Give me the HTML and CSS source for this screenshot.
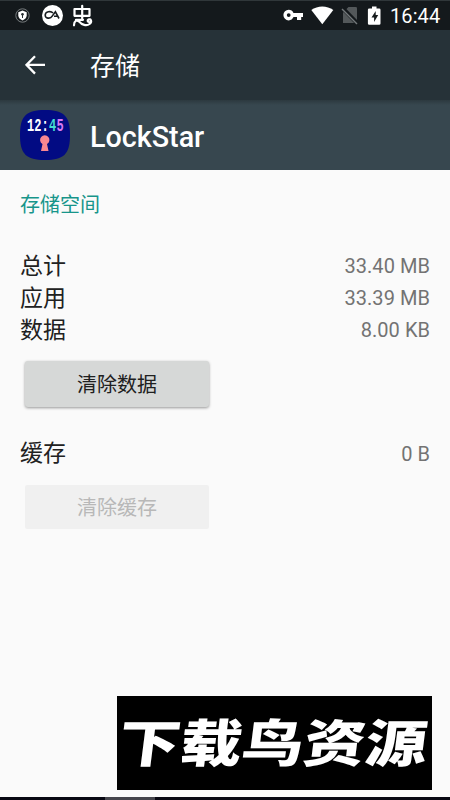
FILE: index.html
```html
<!DOCTYPE html>
<html lang="zh-CN">
<head>
<meta charset="utf-8">
<title>存储</title>
<link rel="stylesheet" href="styles.css">
</head>
<body>
<div class="screen">
  <div class="status">
    <svg class="status-icons" width="100" height="30" viewBox="0 0 100 30">
      <circle cx="22.5" cy="14.500" r="6.700" fill="none" stroke="#777c7e"/>
      <path d="M18.300 11.200l4.200-1.700 4.200 1.700v3.300c0 2.300-1.800 4-4.200 5-2.400-1-4.200-2.700-4.200-5z" fill="#fff"/>
      <circle cx="22.500" cy="13.300" r="1.300" fill="#293033"/><path d="M22.500 13v4" stroke="#293033"/>
      <circle cx="52.500" cy="14.500" r="10.500" fill="#fff"/>
      <path d="M53 12c-2.200-2.300-7.500-1.500-7.800 1.900-.2 3.900 5.200 4.300 7 1.200l3.200-4.300 3.600 6.700M54 15.200h4.500" fill="none" stroke="#181d20" stroke-width="1.600"/>
      <path d="M74.500 8h15v6.800h-15zM82.200 4.800V19M74 24.300c0-4.500 3-6 5.200-3.600 2.500 3.300 7.500 4.500 10.300 2.300 3.200-2.800 1-5.500-1-4.500-1.500.8-.8 2.300.3 2.300M76 18.800h7" fill="none" stroke="#fff" stroke-width="2.200" stroke-linecap="round" stroke-linejoin="round"/>
    </svg>
    <svg width="112" height="30" viewBox="276 0 112 30">
      <path fill="#fff" fill-rule="evenodd" d="M293.500 12c-.8-2-2.700-3.200-4.800-3.200a5.300 5.300 0 1 0 0 10.600c2.200 0 4-1.300 4.800-3.300h3.500v3h4.200v-3h1.800V12zM288.700 12.200a1.900 1.900 0 1 1 0 3.800a1.900 1.900 0 0 1 0-3.800z"/>
      <path fill="#fff" d="M311.300 9c6.300-4.700 15.700-4.700 22 0l-11 14.200z"/>
      <path fill="#53585a" d="M348.500 6h7.200q1.300 0 1.300 1.300V22h-14V11.500z"/>
      <path d="M343 7.500l14.500 15" stroke="#14191c" stroke-width="4"/><path d="M342 8l15 15" stroke="#73787a" stroke-width="1.400"/>
      <path fill="#fff" d="M372 5.500h4.500v2h2.700q1.300 0 1.300 1.300v13.600q0 1.300-1.300 1.300h-10q-1.300 0-1.300-1.300V8.800q0-1.300 1.300-1.300h2.800z"/>
      <path fill="#171c1e" d="M375.700 10l-4.200 6.500h2.600v4.600l4.100-7h-2.500z"/>
    </svg>
    <span class="clock">16:44</span>
  </div>
  <header class="toolbar">
    <svg width="20" height="20" viewBox="0 0 20 20"><path d="M10 1.200L1.500 9.900l8.500 8.700M2 9.900h18" fill="none" stroke="#fff" stroke-width="2.300"/></svg>
    <h1>存储</h1>
  </header>
  <section class="app">
    <div class="app-icon">
      <svg width="50" height="50" viewBox="0 0 50 50">
        <path d="M25 0C44 0 50 6 50 25S44 50 25 50 0 44 0 25 6 0 25 0z" fill="#020b83"/>
        <path d="M22.500 34a4.700 4.700 0 1 1 4.500 0l1.500 7h-7.500z" fill="#fa8791"/>
      </svg>
      <div class="digits"><span>12:</span><span class="mint">4</span><span class="violet">5</span></div>
    </div>
    <h2>LockStar</h2>
  </section>
  <main>
    <h3>存储空间</h3>
    <dl>
      <div class="row"><dt>总计</dt><dd>33.40 MB</dd></div>
      <div class="row"><dt>应用</dt><dd>33.39 MB</dd></div>
      <div class="row"><dt>数据</dt><dd>8.00 KB</dd></div>
    </dl>
    <button class="btn">清除数据</button>
    <dl class="cache"><div class="row"><dt>缓存</dt><dd>0 B</dd></div></dl>
    <button class="btn btn-off" disabled>清除缓存</button>
  </main>
  <div class="watermark"><span>下载鸟资源</span></div>
  <div class="bottom"><i></i></div>
</div>
</body>
</html>
```
FILE: styles.css
```css
* { box-sizing: border-box; }
body { margin: 0; background: #fafafa; font-family: Roboto, "Noto Sans CJK SC", sans-serif; }
h1, h2, h3, dl, dd { margin: 0; font-weight: 400; }
svg { display: block; flex: none; }
.screen { position: relative; width: 450px; height: 800px; overflow: hidden; display: flex; flex-direction: column; }
.status { height: 30px; background: #14191c; border-top: 1px solid #30373a; display: flex; align-items: center; flex: none; }
.status-icons { margin-right: auto; }
.clock { color: #fff; font-size: 20px; line-height: 30px; width: 62px; padding-left: 2px; letter-spacing: .1px; }
.toolbar { height: 70px; background: #263238; display: flex; align-items: center; padding-left: 25px; gap: 45px; color: #fff; flex: none; }
.toolbar h1 { font-size: 25px; line-height: 36px; padding-top: 3px; }
.app { height: 70px; background: linear-gradient(#2c393f, #37474f 5px); display: flex; align-items: center; padding-left: 20px; gap: 20px; color: #fff; flex: none; }
.app h2 { font-size: 28.7px; font-weight: 500; line-height: 36px; padding-top: 3px; }
.app-icon { position: relative; }
.digits { position: absolute; left: 7px; top: 9px; display: flex; gap: 0.3px; font: 700 12px/14px "Liberation Mono", monospace; transform: scaleY(1.6); }
.mint { color: #43ded2; }
.violet { color: #d878f5; }
main { flex: 1; padding: 20px 20px 0; }
h3 { color: #17958a; font-size: 20px; line-height: 30px; margin-bottom: 30px; }
.row { display: flex; justify-content: space-between; align-items: flex-start; height: 32px; }
dt { font-size: 23px; line-height: 32px; color: #212121; padding-top: 1px; }
dd { font-size: 20px; line-height: 32px; color: #737373; letter-spacing: .05px; }
.btn { display: block; width: 184px; height: 46px; margin: 15px 0 0 5px; padding: 2px 0 0; border: 0; border-radius: 3px; background: #d6d8d7; color: #202020; font: 20px/44px Roboto, "Noto Sans CJK SC", sans-serif; box-shadow: 0 1px 3px rgba(0,0,0,.4); }
.cache { margin-top: 30px; }
.cache dd { padding-top: 1px; }
.btn-off { height: 44px; margin-top: 16px; line-height: 42px; background: #f0f0f0; color: #b8b8b8; box-shadow: none; border-radius: 2px; }
.watermark { position: absolute; left: 117px; top: 696px; width: 315px; height: 94px; background: #000; display: flex; align-items: center; justify-content: center; }
.watermark span { color: #fff; font: 900 51px/94px "Noto Sans CJK SC", sans-serif; white-space: nowrap; transform: translate(-1px, -3px) scaleX(1.21) skewX(-6deg); }
.bottom { height: 3px; background: #080812; flex: none; }
.bottom i { display: block; width: 50px; height: 3px; margin-left: 105px; background: #45454c; }
```
